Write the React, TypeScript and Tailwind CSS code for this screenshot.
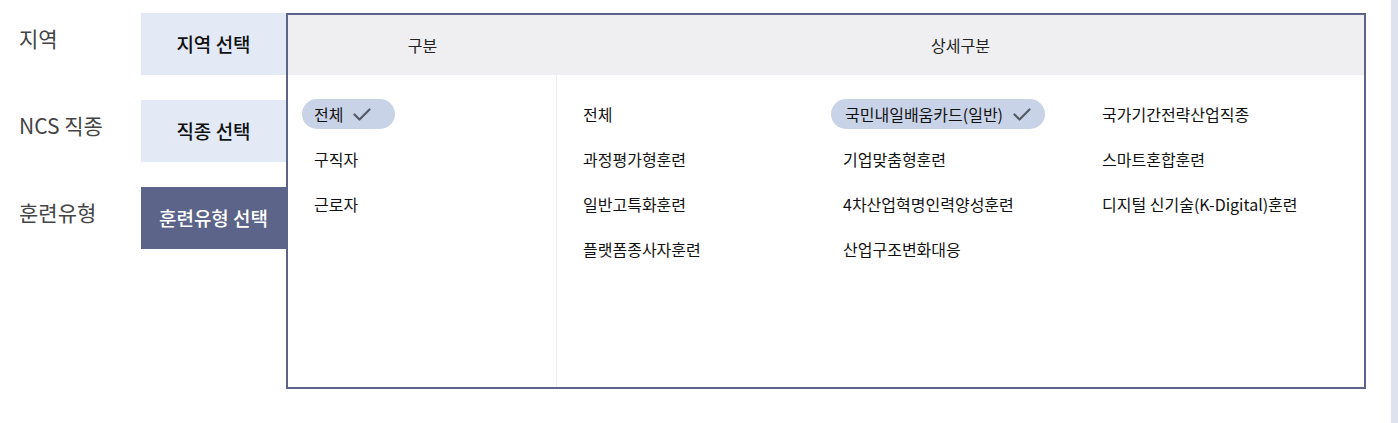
const font = { fontFamily: '"Noto Sans CJK KR", "Noto Sans", sans-serif' }

const categories = [
  { label: '지역', button: '지역 선택', active: false },
  { label: 'NCS 직종', button: '직종 선택', active: false },
  { label: '훈련유형', button: '훈련유형 선택', active: true },
]

const groups = ['전체', '구직자', '근로자']

const details = [
  '전체',
  '국민내일배움카드(일반)',
  '국가기간전략산업직종',
  '과정평가형훈련',
  '기업맞춤형훈련',
  '스마트혼합훈련',
  '일반고특화훈련',
  '4차산업혁명인력양성훈련',
  '디지털 신기술(K-Digital)훈련',
  '플랫폼종사자훈련',
  '산업구조변화대응',
]

function CheckMark() {
  return (
    <svg width="18" height="13" viewBox="0 0 18 13" fill="none" className="shrink-0">
      <path d="M1.5 6.5 L6.5 11.5 L16.5 1.5" stroke="#555a66" strokeWidth="2.2" strokeLinecap="round" strokeLinejoin="round" />
    </svg>
  )
}

function Item({ text, selected, pr }: { text: string; selected: boolean; pr: string }) {
  if (!selected) {
    return (
      <div className="h-[30px] flex items-center px-3 text-[16px] text-[#111]">
        <span>{text}</span>
      </div>
    )
  }
  return (
    <div className={`h-[30px] inline-flex items-center self-start rounded-full bg-[#c9d3e8] text-[16px] text-[#111] ${pr}`}>
      <span>{text}</span>
      <span className="ml-[10px]">
        <CheckMark />
      </span>
    </div>
  )
}

export default function App() {
  return (
    <div className="flex w-[1398px] h-[423px] bg-white overflow-hidden" style={font}>
      <div className="flex-1 flex pt-[13px]">
        {/* labels + buttons */}
        <div className="flex flex-col gap-[25px] pl-[19px]">
          {categories.map((c) => (
            <div key={c.label} className="flex items-center h-[62px]">
              <div className="w-[122px] pb-[10px] text-[21px] text-[#444]">{c.label}</div>
              <div
                className={`w-[145px] h-[62px] flex items-center justify-center text-[19px] font-medium ${
                  c.active ? 'bg-[#5c6589] text-white' : 'bg-[#e3eaf6] text-[#111]'
                }`}
              >
                {c.button}
              </div>
            </div>
          ))}
        </div>

        {/* dropdown panel */}
        <div className="w-[1080px] h-[376px] border-2 border-[#5c6589] flex flex-col">
          <div className="h-[60px] bg-[#efeff1] flex text-[16px] text-[#222]">
            <div className="w-[269px] flex items-center justify-center">구분</div>
            <div className="flex-1 flex items-center justify-center">상세구분</div>
          </div>
          <div className="flex-1 flex">
            <div className="w-[269px] border-r border-[#eeeeee] pl-[14px] pt-[24px] flex flex-col gap-[15px]">
              {groups.map((g, i) => (
                <Item key={g} text={g} selected={i === 0} pr="pl-3 pr-[24px]" />
              ))}
            </div>
            <div className="flex-1 pl-[14px] pt-[24px] grid grid-cols-[260px_259px_1fr] gap-y-[15px] content-start">
              {details.map((d, i) => (
                <div key={d} className="flex">
                  <Item text={d} selected={i === 1} pr="pl-[14px] pr-[14px]" />
                </div>
              ))}
            </div>
          </div>
        </div>
      </div>
      <div className="w-[7px] bg-[#dde2ee]" />
    </div>
  )
}
